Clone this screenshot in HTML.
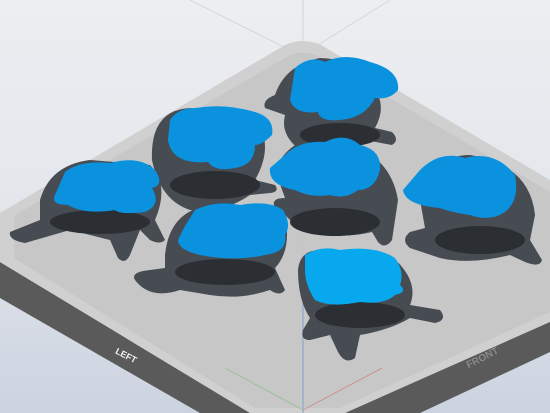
<!DOCTYPE html>
<html><head><meta charset="utf-8"><style>
html,body{margin:0;padding:0;width:550px;height:413px;overflow:hidden}
body{background:linear-gradient(#eceef1 0%,#e3e6ec 50%,#ccd3e0 100%)}
svg{display:block}
</style></head><body>
<svg width="550" height="413" viewBox="0 0 550 413" xmlns="http://www.w3.org/2000/svg">
<line x1="190" y1="0" x2="290" y2="50" stroke="#c9cbd0" stroke-width="0.6"/>
<line x1="390" y1="0" x2="310" y2="50" stroke="#c9cbd0" stroke-width="0.6"/>
<line x1="303" y1="0" x2="303" y2="413" stroke="#c5c8cf" stroke-width="0.7"/>
<polygon points="0,262 250,413 200,413 0,298" fill="#5a5a5a"/>
<polygon points="550,320 550,352 420,413 345,413" fill="#5a5a5a"/>
<path d="M0,213 L285,45 Q303,37 321,45 L550,180 L550,322 L345,413 L250,413 L0,262 Z" fill="#d0d0d0"/>
<path d="M14,216 L290,55 Q303,50 316,55 L550,192 L550,312 L340,408 L255,408 L14,258 Z" fill="#c7c7c7"/>
<line x1="303" y1="60" x2="303" y2="413" stroke="#c0c4cc" stroke-width="0.7"/>
<line x1="303" y1="280" x2="303" y2="413" stroke="#6a9ccc" stroke-width="0.8"/>
<line x1="225" y1="368" x2="303" y2="410" stroke="#7bc07b" stroke-width="0.6"/>
<line x1="303" y1="410" x2="382" y2="368" stroke="#d07070" stroke-width="0.6"/>
<text x="115" y="358" font-family="Liberation Sans,sans-serif" font-size="9" font-weight="bold" fill="#f2f2f2" transform="rotate(27 125 355)">LEFT</text>
<text x="465" y="362" font-family="Liberation Sans,sans-serif" font-size="10" font-weight="bold" fill="#8a8a8a" transform="rotate(-27 480 358)">FRONT</text>
<g fill="#474b52">
<path d="M275,95 Q262,100 265,108 L285,115 Q280,135 300,150 Q330,160 365,140 L392,145 Q400,140 392,132 L375,128 Q385,110 378,95 Q370,60 320,58 Q285,65 275,95Z"/>
<path d="M152,160 Q150,110 190,108 L255,118 Q275,145 255,180 L275,185 Q280,192 270,193 L250,195 Q220,215 190,210 Q160,200 152,160Z"/>
<path d="M40,200 Q50,165 90,160 L150,165 Q170,185 155,220 L165,240 Q160,245 150,240 L140,230 L130,255 Q125,265 118,258 L110,240 Q90,235 70,230 L25,243 Q8,240 10,232 L40,220Z"/>
<path d="M275,170 Q290,135 330,138 Q390,150 398,200 L392,240 Q385,250 378,242 L372,232 Q340,240 300,230 L285,215 L275,208 Q270,198 285,198Z"/>
<path d="M165,255 Q170,205 220,205 L285,215 Q292,250 275,268 L285,290 Q280,297 270,290 Q240,300 210,295 L180,290 Q150,300 135,280 Q130,272 150,270 L165,268Z"/>
<path d="M420,200 Q430,155 470,155 Q530,165 535,215 L530,240 L542,260 Q540,268 525,262 L510,255 Q470,265 440,258 L410,248 Q400,240 410,232 L425,228Z"/>
<path d="M298,270 Q300,250 320,250 L390,255 Q420,280 410,305 L440,310 Q448,320 435,323 L410,318 Q390,330 360,335 L355,358 Q345,365 338,352 L330,335 L310,340 Q300,340 303,330 L310,318 Q298,300 298,270Z"/>
</g>
<g fill="#2b2e33">
<ellipse cx="340" cy="135" rx="40" ry="12"/>
<ellipse cx="215" cy="185" rx="45" ry="14"/>
<ellipse cx="100" cy="222" rx="50" ry="12"/>
<ellipse cx="335" cy="222" rx="45" ry="14"/>
<ellipse cx="225" cy="272" rx="50" ry="13"/>
<ellipse cx="480" cy="240" rx="45" ry="14"/>
<ellipse cx="360" cy="315" rx="45" ry="13"/>
</g>
<g fill="#0a92de">
<path d="M295,68 Q310,55 325,62 Q345,52 370,62 Q400,70 398,90 Q390,100 375,98 Q365,118 340,120 Q320,122 318,112 Q295,115 290,100Z"/>
<path d="M170,120 Q178,108 195,108 Q225,103 255,112 Q275,118 272,135 Q262,145 255,145 Q255,165 235,168 Q215,172 208,162 Q172,165 168,140Z"/>
<path d="M65,172 Q80,160 110,163 Q140,155 155,170 Q165,185 152,188 Q162,205 145,212 Q120,215 115,210 Q85,215 68,205 Q50,205 55,195Z"/>
<path d="M285,155 Q300,140 325,142 Q345,132 360,145 Q382,150 380,170 Q375,190 358,190 Q345,200 330,195 Q310,198 295,190 Q268,185 270,168Z"/>
<path d="M195,210 Q215,200 240,205 Q270,200 283,210 Q292,225 285,235 Q288,252 265,255 Q235,262 200,255 Q178,250 178,240 Q185,225 190,218Z"/>
<path d="M420,170 Q440,150 465,158 Q495,150 515,175 Q520,200 505,212 Q490,222 470,215 Q450,212 440,208 Q405,205 403,190Z"/>
</g>
<path fill="#08a8ee" d="M305,255 Q320,245 340,250 Q375,245 395,258 Q405,272 400,285 Q408,292 395,295 Q385,305 360,302 Q330,308 315,300 Q305,285 305,270Z"/>
</svg>
</body></html>
